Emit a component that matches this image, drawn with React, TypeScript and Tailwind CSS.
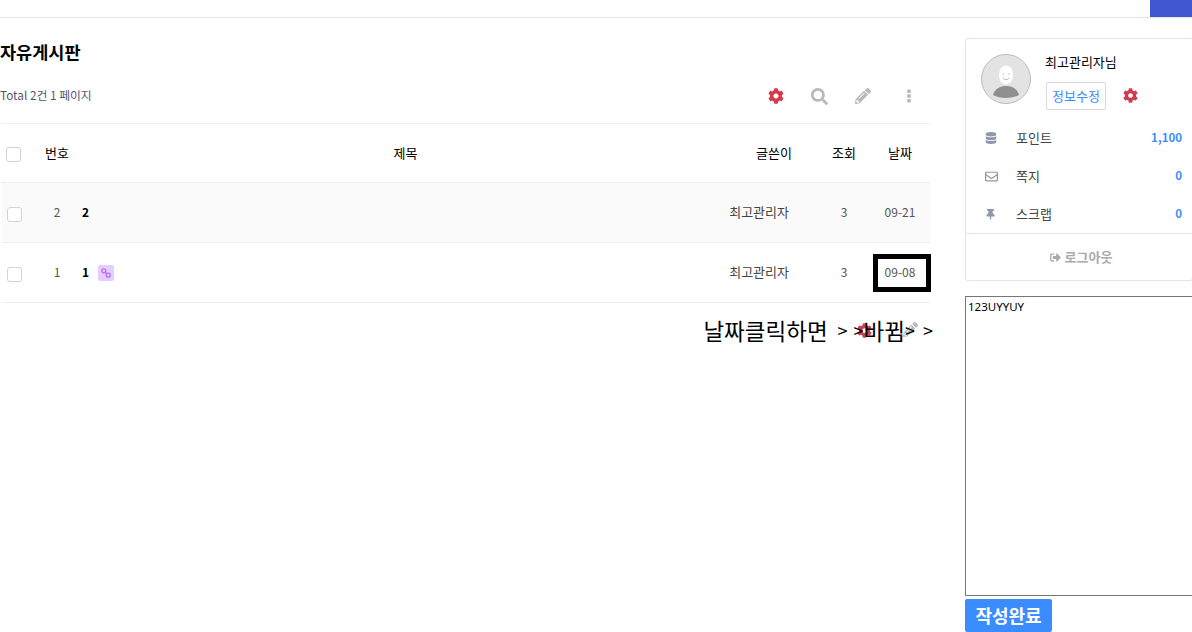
import React from "react";
import { FaCog, FaSearch, FaPencilAlt, FaEllipsisV, FaDatabase, FaRegEnvelope, FaThumbtack, FaSignOutAlt } from "react-icons/fa";

const font = { fontFamily: '"Noto Sans CJK KR", "Noto Sans", sans-serif' };

function Check() {
  return <span className="block w-[15px] h-[15px] rounded-[3px] border border-[#d0d3dc] bg-white" />;
}

function Row({ num, title, date, bg, link }: { num: string; title: string; date: string; bg: string; link?: boolean }) {
  return (
    <div className={`grid grid-cols-[44px_36px_1fr_109px_50px_62px] items-center h-[60px] border-b border-[#eeeeee] text-[12px] text-[#555] ${bg}`}>
      <div className="pl-[5px] pt-[3px]"><Check /></div>
      <div className="text-center pr-[14px] pb-[2px]">{num}</div>
      <div className="flex items-center gap-[9px] font-bold text-black pb-[2px]">
        <span>{title}</span>
        {link && (
          <span className="w-[16px] h-[16px] rounded-[2px] bg-[#e8ccff] flex items-center justify-center mt-[3px]">
            <svg width="12" height="12" viewBox="0 0 12 12" fill="none" stroke="#b070f0" strokeWidth="1.3">
              <circle cx="3.8" cy="3.8" r="2" />
              <circle cx="8.2" cy="8.2" r="2" />
              <path d="M5 5l2 2" />
            </svg>
          </span>
        )}
      </div>
      <div className="text-right text-[#444] pr-[29px] text-[13px] pb-[2px] whitespace-nowrap">최고관리자</div>
      <div className="text-center pl-[2px] pb-[2px]">3</div>
      <div className="text-center pl-[2px] pb-[2px]">{date}</div>
    </div>
  );
}

function Stat({ icon, label, value }: { icon: React.ReactNode; label: string; value: string }) {
  return (
    <div className="flex items-center h-[38px] text-[13px] pl-[19px] pr-[10px]">
      <span className="w-[31px] text-[#8d99aa]">{icon}</span>
      <span className="flex-1 text-[#444]">{label}</span>
      <span className="font-bold text-[#3b8cff] text-[11.5px]">{value}</span>
    </div>
  );
}

export default function App() {
  return (
    <div className="relative w-[1192px] h-[632px] overflow-hidden bg-white" style={font}>
      <div className="h-[18px] border-b border-[#e0e3e6] flex justify-end">
        <div className="w-[42px] h-[17px] bg-[#4056d0]" />
      </div>
      <div className="flex">
        <main className="w-[930px] shrink-0">
          <h1 className="h-[34px] mt-[17px] flex items-center text-[17.5px] font-bold text-black">자유게시판</h1>
          <div className="h-[54px] flex items-center justify-between">
            <span className="text-[11.8px] text-[#555570] pb-[2px]">Total 2건 1 페이지</span>
            <div className="flex items-center mr-[14px] gap-[27px] text-[#b9b9b9]">
              <FaCog size={16} className="text-[#d13c50]" />
              <FaSearch size={17} />
              <FaPencilAlt size={16} />
              <FaEllipsisV size={14} className="ml-[4px]" />
            </div>
          </div>
          <div className="h-[60px] ml-[1px] border-t border-b border-[#eeeeee] grid grid-cols-[44px_64px_1fr_90px_50px_62px] items-center text-[13px] text-black">
            <div className="pl-[5px] pt-[3px]"><Check /></div>
            <div>번호</div>
            <div className="text-center pr-[26px]">제목</div>
            <div className="text-right pr-[26px]">글쓴이</div>
            <div className="text-center pl-[2px]">조회</div>
            <div className="text-center pl-[2px]">날짜</div>
          </div>
          <div className="ml-[2px]">
            <Row num="2" title="2" date="09-21" bg="bg-[#fafafa]" />
            <Row num="1" title="1" date="09-08" bg="bg-white" link />
          </div>
          <div className="relative mt-[12px] leading-[30px] text-black flex justify-end items-center -mr-[3px] whitespace-pre">
            <span className="relative z-10 text-[22.5px]">날짜클릭하면</span>
            <span className="relative z-10 text-[18px] ml-[10px]">&gt;</span>
            <span className="relative z-10 text-[18px] ml-[6px]">&gt;</span>
            <span className="relative z-10 text-[22.5px]">바뀜</span>
            <span className="relative z-10 text-[18px] ml-[0px]">&gt;</span>
            <span className="relative z-10 text-[18px] ml-[8px]">&gt;</span>
            <FaCog size={15} className="absolute right-[61px] top-[8px] text-[#d13c50]" />
            <FaPencilAlt size={15} className="absolute right-[15px] top-[7px] text-[#b9b9b9]" />
          </div>
        </main>
        <aside className="ml-[35px] w-[262px] shrink-0 pt-[20px]">
          <div className="h-[243px] w-[228px] border border-[#dfe6e9] rounded-[3px]">
            <div className="flex pl-[15px] pt-[15px]">
              <svg width="50" height="50" viewBox="0 0 50 50">
                <circle cx="25" cy="25" r="24.5" fill="#e3e3e3" stroke="#bbbbbb" />
                <ellipse cx="25" cy="21" rx="7" ry="9.5" fill="#fff" />
                <circle cx="22" cy="20" r="0.6" fill="#888" />
                <circle cx="28" cy="20" r="0.6" fill="#888" />
                <path d="M22 24a3.5 3.5 0 0 0 6 0" fill="none" stroke="#999" strokeWidth="0.7" />
                <path d="M12 41c2-7 8-9 13-9s11 2 13 9c-7 4-19 4-26 0z" fill="#8f8f8f" />
              </svg>
              <div className="ml-[15px]">
                <div className="text-[13px] text-black mt-[-2px] -ml-[1px] h-[20px] flex items-center">최고관리자님</div>
                <div className="flex items-center mt-[10px]">
                  <span className="w-[60px] h-[28px] border border-[#d8dce0] rounded-[2px] flex items-center justify-center text-[13px] text-[#3b8cff]">정보수정</span>
                  <FaCog size={15} className="ml-[17px] -mt-[2px] text-[#d13c50]" />
                </div>
              </div>
            </div>
            <div className="mt-[9px]">
              <Stat icon={<FaDatabase size={12} />} label="포인트" value="1,100" />
              <Stat icon={<FaRegEnvelope size={13} />} label="쪽지" value="0" />
              <Stat icon={<FaThumbtack size={11} />} label="스크랩" value="0" />
            </div>
            <div className="border-t border-[#dfe6e9] h-[47px] flex items-center justify-center gap-[4px] text-[13px] font-bold text-[#aaaaaa] pl-[4px]">
              <FaSignOutAlt size={11} />
              <span>로그아웃</span>
            </div>
          </div>
          <textarea
            readOnly
            value="123UYYUY"
            className="block mt-[15px] w-[262px] h-[300px] border border-[#767676] text-[11.5px] leading-[14px] px-[2px] py-[3px] text-black outline-none"
            style={{ fontFamily: '"Noto Sans", sans-serif' }}
          />
          <button className="block mt-[3px] w-[87px] h-[33px] rounded-[2px] bg-[#3b8cff] text-white text-[18px] font-bold">작성완료</button>
        </aside>
      </div>
      <div className="absolute left-[873px] top-[254px] w-[58px] h-[38px] border-[5px] border-black" />
    </div>
  );
}
